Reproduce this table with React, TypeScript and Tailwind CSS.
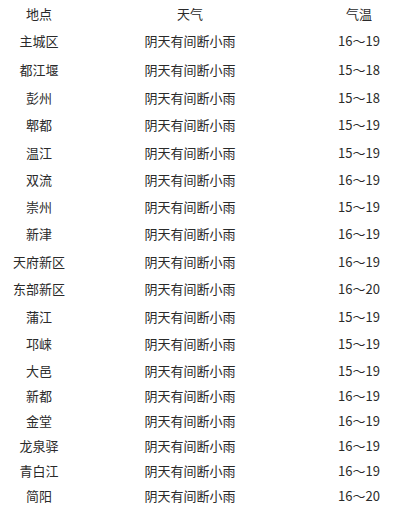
import React from "react";

const rows: { place: string; weather: string; temp: string; h: string }[] = [
  { place: "主城区", weather: "阴天有间断小雨", temp: "16～19", h: "h-[29px]" },
  { place: "都江堰", weather: "阴天有间断小雨", temp: "15～18", h: "h-[29px]" },
  { place: "彭州", weather: "阴天有间断小雨", temp: "15～18", h: "h-[27px]" },
  { place: "郫都", weather: "阴天有间断小雨", temp: "15～19", h: "h-[27px]" },
  { place: "温江", weather: "阴天有间断小雨", temp: "15～19", h: "h-[28px]" },
  { place: "双流", weather: "阴天有间断小雨", temp: "16～19", h: "h-[27px]" },
  { place: "崇州", weather: "阴天有间断小雨", temp: "15～19", h: "h-[27px]" },
  { place: "新津", weather: "阴天有间断小雨", temp: "16～19", h: "h-[27px]" },
  { place: "天府新区", weather: "阴天有间断小雨", temp: "16～19", h: "h-[28px]" },
  { place: "东部新区", weather: "阴天有间断小雨", temp: "16～20", h: "h-[27px]" },
  { place: "蒲江", weather: "阴天有间断小雨", temp: "15～19", h: "h-[28px]" },
  { place: "邛崃", weather: "阴天有间断小雨", temp: "15～19", h: "h-[27px]" },
  { place: "大邑", weather: "阴天有间断小雨", temp: "15～19", h: "h-[26px]" },
  { place: "新都", weather: "阴天有间断小雨", temp: "16～19", h: "h-[25px]" },
  { place: "金堂", weather: "阴天有间断小雨", temp: "16～19", h: "h-[25px]" },
  { place: "龙泉驿", weather: "阴天有间断小雨", temp: "16～19", h: "h-[25px]" },
  { place: "青白江", weather: "阴天有间断小雨", temp: "16～19", h: "h-[25px]" },
  { place: "简阳", weather: "阴天有间断小雨", temp: "16～20", h: "h-[25px]" },
];

function Row({ a, b, c, h }: { a: string; b: string; c: string; h: string }) {
  return (
    <div className={`grid grid-cols-[78px_224px_1fr] items-center ${h}`}>
      <div className="text-center">{a}</div>
      <div className="text-center">{b}</div>
      <div className="pl-[16px] text-center">{c}</div>
    </div>
  );
}

export default function App() {
  return (
    <div
      className="w-[400px] h-[508px] bg-white text-[13px] leading-none text-[#2a2a2a] overflow-hidden"
      style={{ fontFamily: '"Noto Sans CJK SC", "Noto Sans", sans-serif' }}
    >
      <Row a="地点" b="天气" c="气温" h="h-[26px]" />
      {rows.map((r) => (
        <Row key={r.place} a={r.place} b={r.weather} c={r.temp} h={r.h} />
      ))}
    </div>
  );
}
